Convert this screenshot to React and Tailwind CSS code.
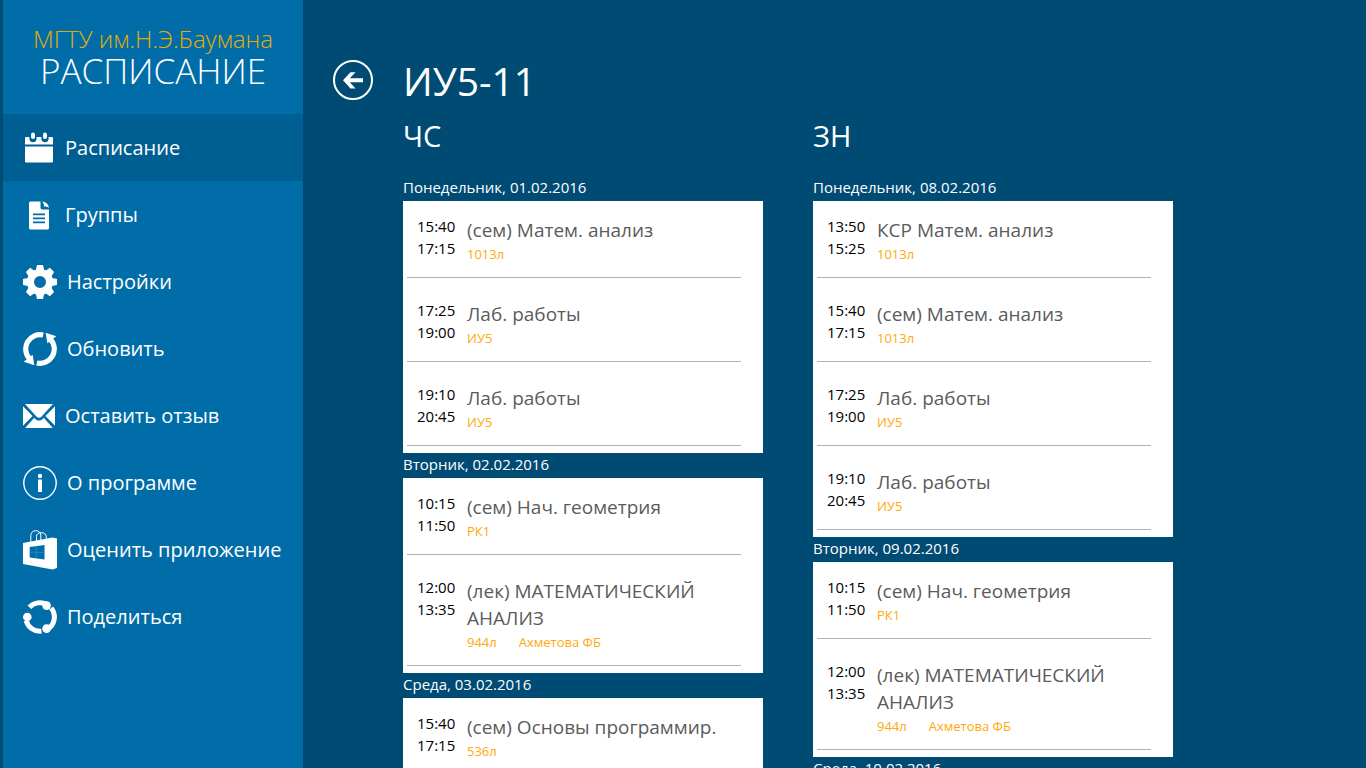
const CalendarIcon = () => (
  <svg width="32" height="32" viewBox="0 0 32 32" fill="#fff">
    <path d="M3 5h3.4v1.6a3.6 3.6 0 0 0 7.2 0V5h4.8v1.6a3.6 3.6 0 0 0 7.2 0V5H29a1 1 0 0 1 1 1v6.5H2V6a1 1 0 0 1 1-1z" />
    <path d="M2 14.5h28v15a1 1 0 0 1-1 1H3a1 1 0 0 1-1-1z" />
    <rect x="8" y="0.5" width="4" height="6.5" rx="2" />
    <rect x="20" y="0.5" width="4" height="6.5" rx="2" />
  </svg>
);

const DocumentIcon = () => (
  <svg width="32" height="32" viewBox="0 0 32 32" fill="#fff">
    <path
      fillRule="evenodd"
      d="M7.5 2.5h10v6a2 2 0 0 0 2 2H26V29a1.5 1.5 0 0 1-1.5 1.5h-17A1.5 1.5 0 0 1 6 29V4a1.5 1.5 0 0 1 1.5-1.5zM10 14.5h12v1.8H10zM10 18.5h12v1.8H10zM10 22.5h12v1.8H10z"
    />
    <path d="M19 2.5c4 .4 6.6 2.8 7 6.5-1.4-1.3-2.8-1.6-5-1.5 0-2-.4-3.6-2-5z" />
  </svg>
);

const GearIcon = () => (
  <svg width="34" height="34" viewBox="0 0 34 34">
    <g fill="#fff">
      {[0, 45, 90, 135, 180, 225, 270, 315].map((angle) => (
        <path key={angle} d="M14 0h6l1.3 6h-8.6z" transform={`rotate(${angle} 17 17)`} />
      ))}
    </g>
    <circle cx="17" cy="17" r="9.5" fill="none" stroke="#fff" strokeWidth="7" />
  </svg>
);

const RefreshIcon = () => (
  <svg width="34" height="34" viewBox="0 0 34 34">
    <g fill="none" stroke="#fff" strokeWidth="5.2">
      <path d="M20.2 3A14.3 14.3 0 0 0 6.2 26.3" />
      <path d="M13.8 31A14.3 14.3 0 0 0 27.800 7.700" />
    </g>
    <path d="M.7 29.700 11.3 33.300 9.700 22.800zM33.300 4.300 22.700.7 24.300 11.200z" fill="#fff" />
  </svg>
);

const MailIcon = () => (
  <svg width="32" height="24" viewBox="0 0 32 24" fill="#fff">
    <path d="M2 0h28L18.6 12.4c-1.7 1.7-3.5 1.7-5.2 0z" />
    <path d="M0 2.2 9.6 12 0 21.8zM32 2.2 22.4 12l9.6 9.8z" />
    <path d="M2.2 24 11.2 13.8l1.2 1.2c2.2 2 5 2 7.2 0l1.2-1.2L29.8 24z" />
  </svg>
);

const InfoIcon = () => (
  <svg width="34" height="34" viewBox="0 0 34 34">
    <circle cx="17" cy="17" r="16.2" fill="none" stroke="#fff" strokeWidth="1.4" />
    <circle cx="17" cy="10" r="2.2" fill="#fff" />
    <rect x="15" y="13.5" width="4" height="12.5" fill="#fff" />
  </svg>
);

const StoreIcon = () => (
  <svg width="34" height="40" viewBox="0 0 34 40">
    <g fill="none" stroke="#fff" strokeWidth="1">
      <path d="M7.8 12V5.5C7.8 2.5 10 .7 12.8.7s5 1.8 5 4.3V10" />
      <path d="M13.5 11V6.5c0-2.4 1.8-3.8 4.6-3.8 3.2 0 5.2 1.6 5.2 4V9" />
    </g>
    <path d="M0 13 29.5 7.5 34 8.5V38l-4.5 1.5L0 34z" fill="#fff" />
    <path d="M6.7 17 21.5 15v14.5L6.7 27.5z" fill="#006da8" />
    <path d="M13.3 16.2v12.100M6.7 22.300h14.800" stroke="#2a93c8" strokeWidth="0.8" />
  </svg>
);

const ShareIcon = () => (
  <svg width="34" height="34" viewBox="0 0 34 34">
    <g fill="none" stroke="#fff" strokeWidth="5">
      <path d="M6.4 7.3A14.3 14.3 0 0 1 23.700 4.400" />
      <path d="M3.2 20.600A14.3 14.3 0 0 0 18.500 31.200" />
      <path d="M28.2 8A14.3 14.3 0 0 1 24 29.500" />
    </g>
    <g fill="#fff">
      <circle cx="4.3" cy="17" r="4.3" />
      <circle cx="23.6" cy="5.6" r="4.3" />
      <circle cx="23.6" cy="28.6" r="4.3" />
    </g>
  </svg>
);

const menu = [
  { label: "Расписание", icon: CalendarIcon, active: true },
  { label: "Группы", icon: DocumentIcon },
  { label: "Настройки", icon: GearIcon },
  { label: "Обновить", icon: RefreshIcon },
  { label: "Оставить отзыв", icon: MailIcon },
  { label: "О программе", icon: InfoIcon },
  { label: "Оценить приложение", icon: StoreIcon },
  { label: "Поделиться", icon: ShareIcon },
];

const geometry = { start: "10:15", end: "11:50", title: "(сем) Нач. геометрия", room: "РК1" };
const lecture = {
  start: "12:00",
  end: "13:35",
  title: "(лек) МАТЕМАТИЧЕСКИЙ АНАЛИЗ",
  room: "944л",
  teacher: "Ахметова ФБ",
};
const programming = { start: "15:40", end: "17:15", title: "(сем) Основы программир.", room: "536л" };

const weeks = [
  {
    name: "ЧС",
    days: [
      {
        date: "Понедельник, 01.02.2016",
        lessons: [
          { start: "15:40", end: "17:15", title: "(сем) Матем. анализ", room: "1013л" },
          { start: "17:25", end: "19:00", title: "Лаб. работы", room: "ИУ5" },
          { start: "19:10", end: "20:45", title: "Лаб. работы", room: "ИУ5" },
        ],
      },
      { date: "Вторник, 02.02.2016", lessons: [geometry, lecture] },
      { date: "Среда, 03.02.2016", lessons: [programming] },
    ],
  },
  {
    name: "ЗН",
    days: [
      {
        date: "Понедельник, 08.02.2016",
        lessons: [
          { start: "13:50", end: "15:25", title: "КСР Матем. анализ", room: "1013л" },
          { start: "15:40", end: "17:15", title: "(сем) Матем. анализ", room: "1013л" },
          { start: "17:25", end: "19:00", title: "Лаб. работы", room: "ИУ5" },
          { start: "19:10", end: "20:45", title: "Лаб. работы", room: "ИУ5" },
        ],
      },
      { date: "Вторник, 09.02.2016", lessons: [geometry, lecture] },
      { date: "Среда, 10.02.2016", lessons: [programming] },
    ],
  },
];

const Sidebar = () => (
  <aside className="w-[300px] shrink-0 bg-[#006da8]">
    <div className="flex h-[114px] flex-col items-center pt-[23px] font-light">
      <p className="text-[24px] leading-8 whitespace-nowrap text-[#e5ae00]">МГТУ им.Н.Э.Баумана</p>
      <p className="text-[35px] leading-8 whitespace-nowrap">РАСПИСАНИЕ</p>
    </div>
    <nav>
      {menu.map(({ label, icon: Icon, active }) => (
        <a
          key={label}
          href="#"
          className={`flex h-[67px] items-center gap-[10px] pl-5 text-[20px] whitespace-nowrap ${active ? "bg-[#005f92]" : ""}`}
        >
          <Icon />
          <span>{label}</span>
        </a>
      ))}
    </nav>
  </aside>
);

const Lesson = ({ lesson }) => (
  <li className="pb-[7px]">
    <div className="flex pt-[14px] pb-[13px] pl-[14px]">
      <div className="w-[50px] shrink-0 text-[15px] leading-[22px] text-black">
        <div>{lesson.start}</div>
        <div>{lesson.end}</div>
      </div>
      <div className="w-[270px] pt-0.5">
        <h4 className="text-[19px] leading-[27px] text-[#5b5b5b]">{lesson.title}</h4>
        <div className="flex gap-[22px] text-[13px] leading-5 text-[#ffa90a]">
          <span>{lesson.room}</span>
          {lesson.teacher && <span>{lesson.teacher}</span>}
        </div>
      </div>
    </div>
    <hr className="mr-[22px] ml-1 border-t border-[#b0b0b0]" />
  </li>
);

const Week = ({ week }) => (
  <section className="w-[360px] shrink-0">
    <h2 className="mb-5 text-[29px] leading-10">{week.name}</h2>
    {week.days.map((day) => (
      <div key={day.date}>
        <h3 className="h-[25px] text-[15px] leading-[22px]">{day.date}</h3>
        <ul className="bg-white">
          {day.lessons.map((lesson) => (
            <Lesson key={lesson.start} lesson={lesson} />
          ))}
        </ul>
      </div>
    ))}
  </section>
);

export default function App() {
  return (
    <div className="flex h-screen overflow-hidden bg-[#004b73] pl-[3px] font-['Open_Sans','Noto_Sans',sans-serif] text-white">
      <Sidebar />
      <main className="min-w-0 flex-1 overflow-hidden px-[30px] pt-[60px]">
        <header className="flex h-10 items-center gap-[30px]">
          <button type="button" aria-label="Назад">
            <svg width="40" height="40" viewBox="0 0 40 40">
              <circle cx="20" cy="20" r="19" fill="none" stroke="#fff" strokeWidth="2" />
              <path d="M10 20.3 17.5 12.3h5L16.8 18.3H30v4H16.8l5.7 6.2h-5z" fill="#fff" />
            </svg>
          </button>
          <h1 className="pt-0.5 text-[39px] leading-10">ИУ5-11</h1>
        </header>
        <div className="mt-4 flex gap-[50px] pl-[70px]">
          {weeks.map((week) => (
            <Week key={week.name} week={week} />
          ))}
        </div>
      </main>
    </div>
  );
}
